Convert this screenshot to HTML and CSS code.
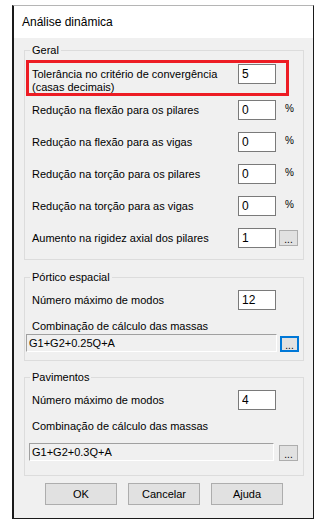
FILE: index.html
```html
<!DOCTYPE html>
<html lang="pt">
<head>
    <meta charset="UTF-8">
    <title>Análise dinâmica</title>
    <link rel="stylesheet" href="styles.css">
</head>
<body>
    <div class="dialog">
        <div class="titlebar">Análise dinâmica</div>
        <div class="content">
            <fieldset class="group group-geral">
                <legend>Geral</legend>
                <div class="row-highlight">
                    <label class="label-two">Tolerância no critério de convergência<br>(casas decimais)</label>
                    <input class="num" type="text" value="5">
                </div>
                <div class="rows">
                    <div class="row">
                        <label>Redução na flexão para os pilares</label>
                        <input class="num" type="text" value="0">
                        <span class="unit">%</span>
                    </div>
                    <div class="row">
                        <label>Redução na flexão para as vigas</label>
                        <input class="num" type="text" value="0">
                        <span class="unit">%</span>
                    </div>
                    <div class="row">
                        <label>Redução na torção para os pilares</label>
                        <input class="num" type="text" value="0">
                        <span class="unit">%</span>
                    </div>
                    <div class="row">
                        <label>Redução na torção para as vigas</label>
                        <input class="num" type="text" value="0">
                        <span class="unit">%</span>
                    </div>
                    <div class="row">
                        <label>Aumento na rigidez axial dos pilares</label>
                        <input class="num" type="text" value="1">
                        <span class="unit"><button class="dots">...</button></span>
                    </div>
                </div>
            </fieldset>

            <fieldset class="group group-portico">
                <legend>Pórtico espacial</legend>
                <div class="row">
                    <label>Número máximo de modos</label>
                    <input class="num" type="text" value="12">
                    <span class="unit"></span>
                </div>
                <div class="combo-label">Combinação de cálculo das massas</div>
                <div class="combo-row combo-portico">
                    <div class="field">G1+G2+0.25Q+A</div>
                    <button class="dots focused">...</button>
                </div>
            </fieldset>

            <fieldset class="group group-pav">
                <legend>Pavimentos</legend>
                <div class="row">
                    <label>Número máximo de modos</label>
                    <input class="num" type="text" value="4">
                    <span class="unit"></span>
                </div>
                <div class="combo-label">Combinação de cálculo das massas</div>
                <div class="combo-row combo-pav">
                    <div class="field">G1+G2+0.3Q+A</div>
                    <button class="dots">...</button>
                </div>
            </fieldset>

            <div class="buttons">
                <button class="btn">OK</button>
                <button class="btn">Cancelar</button>
                <button class="btn">Ajuda</button>
            </div>
        </div>
    </div>
</body>
</html>
```

FILE: styles.css
```css
body {
    margin: 0;
    background: #ffffff;
    font-family: "Liberation Sans", Arial, sans-serif;
    font-size: 11px;
    color: #000000;
}

.dialog {
    margin: 5px 0 0 12px;
    width: 302px;
    box-sizing: border-box;
    border: 1px solid #1a1a1a;
    border-top-color: #b5b5b5;
    border-left-width: 2px;
    background: #f0f0f0;
}

.titlebar {
    height: 32px;
    line-height: 32px;
    padding-left: 8px;
    background: #ffffff;
    font-size: 12px;
    box-sizing: border-box;
}

.content {
    padding: 6px 9px 13px 10px;
}

.group {
    margin: 0;
    padding: 0;
    min-width: 0;
    border: 1px solid #dcdcdc;
}

.group legend {
    margin-left: 5px;
    padding: 0 2px;
    line-height: 12px;
}

.group-geral {
    padding: 4px 0 11px 0;
}

.group-portico {
    margin-top: 11px;
    padding: 7px 0 8px 0;
}

.group-pav {
    margin-top: 10px;
    padding: 7px 0 14px 0;
}

.row-highlight {
    display: grid;
    grid-template-columns: 1fr 38px;
    align-items: start;
    width: 263px;
    box-sizing: border-box;
    margin-left: 1px;
    padding: 1px 10px 0 3px;
    height: 36px;
    border: 3px solid #ed1c24;
}

.label-two {
    line-height: 13px;
    padding-top: 4px;
}

.rows {
    margin-top: 4px;
    display: flex;
    flex-direction: column;
    gap: 12px;
}

.row {
    display: grid;
    grid-template-columns: 1fr 38px 27px;
    align-items: center;
    padding-left: 7px;
    height: 20px;
}

.num {
    width: 38px;
    height: 20px;
    box-sizing: border-box;
    margin: 0;
    padding: 0 3px;
    border: 1px solid #7a7a7a;
    background: #ffffff;
    font-family: inherit;
    font-size: 12px;
    color: #000000;
    outline: none;
}

.unit {
    display: flex;
    align-items: center;
    padding-left: 9px;
    font-size: 10px;
    margin-top: -4px;
}

.row .unit:has(.dots) {
    padding-left: 3px;
    margin-top: 0;
}

.dots {
    width: 19px;
    height: 16px;
    box-sizing: border-box;
    margin: 0;
    padding: 0;
    border: 1px solid #adadad;
    background: #e1e1e1;
    font-family: inherit;
    font-size: 10px;
    line-height: 18px;
    color: #000000;
}

.dots.focused {
    border: 2px solid #0078d7;
    line-height: 16px;
}

.combo-label {
    padding-left: 7px;
    margin-top: 10px;
    line-height: 12px;
}

.combo-row {
    display: flex;
    align-items: flex-end;
}

.combo-portico {
    margin-top: 2px;
    padding-left: 1px;
}

.combo-pav {
    margin-top: 11px;
    padding-left: 4px;
}

.field {
    height: 18px;
    box-sizing: border-box;
    border: 1px solid #a0a0a0;
    border-right-color: #ffffff;
    border-bottom-color: #ffffff;
    background: #f0f0f0;
    font-size: 11px;
    line-height: 16px;
    padding-left: 2px;
}

.combo-portico .field {
    width: 251px;
}

.combo-pav .field {
    width: 245px;
}

.combo-row .dots {
    margin-left: 3px;
}

.combo-pav .dots {
    margin-left: 5px;
}

.buttons {
    display: flex;
    gap: 11px;
    margin-top: 7px;
    padding-left: 21px;
}

.btn {
    width: 72px;
    height: 22px;
    margin: 0;
    padding: 0;
    border: 1px solid #adadad;
    background: #e1e1e1;
    font-family: inherit;
    font-size: 11px;
    color: #000000;
}
```
